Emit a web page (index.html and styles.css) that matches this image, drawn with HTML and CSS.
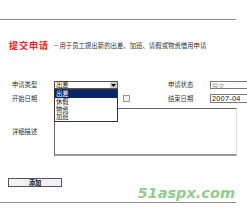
FILE: index.html
```html
<!DOCTYPE html>
<html>
<head>
<meta charset="utf-8">
<link rel="stylesheet" href="styles.css">
</head>
<body>
<div class="page">
  <div class="header">
    <span class="title">提交申请</span>
    <span class="subtitle">－用于员工提出新的出差、加班、请假或物资借用申请</span>
  </div>
  <div class="form">
    <div class="label">申请类型</div>
    <div class="cell">
      <div class="select">
        <span class="select-text">出差</span>
        <span class="select-btn"><svg width="5" height="3" viewBox="0 0 5 3"><path d="M0 0H5L2.5 3Z" fill="#000"/></svg></span>
      </div>
      <div class="options">
        <div class="opt sel">出差</div>
        <div class="opt">休假</div>
        <div class="opt">物资</div>
        <div class="opt">加班</div>
      </div>
    </div>
    <div class="label">申请状态</div>
    <div class="cell"><div class="input disabled">提交</div></div>

    <div class="label">开始日期</div>
    <div class="cell date-cell">
      <div class="input date-input"></div>
      <span class="cal-btn"></span>
    </div>
    <div class="label">结束日期</div>
    <div class="cell"><div class="input tall">2007-04</div></div>

    <div class="label desc-label">详细描述</div>
    <div class="textarea"></div>
  </div>
  <div class="actions">
    <button class="btn">添加</button>
  </div>
  <div class="watermark">51aspx.com</div>
</div>
</body>
</html>
```
FILE: styles.css
```css
html, body {
  margin: 0;
  padding: 0;
  width: 247px;
  height: 222px;
  overflow: hidden;
  background: #ffffff;
  font-family: "Noto Sans CJK SC", "Liberation Sans", sans-serif;
  color: #222;
}
.page {
  position: relative;
  margin-top: 19px;
  width: 236px;
  height: 182px;
  border-top: 1px solid #8c8c8c;
  border-bottom: 1px solid #8c8c8c;
}
.header {
  display: flex;
  align-items: center;
  height: 10px;
  margin-top: 21px;
  padding-left: 9px;
}
.title {
  color: #e5212b;
  font-weight: 700;
  font-size: 9px;
  letter-spacing: 1px;
  line-height: 10px;
}
.subtitle {
  margin-left: 4px;
  font-size: 6.4px;
  line-height: 10px;
  color: #333;
}
.form {
  display: grid;
  grid-template-columns: 54px 114px 42px 37px;
  grid-template-rows: 8px 9px 48px;
  row-gap: 5px;
  margin-top: 30px;
}
.label {
  font-size: 6.3px;
  line-height: 8px;
  padding-left: 12px;
  align-self: center;
  color: #333;
  white-space: nowrap;
}
.form > .label:nth-child(3),
.form > .label:nth-child(7) {
  padding-left: 0;
}
.cell {
  position: relative;
  display: flex;
  align-items: stretch;
}
.select {
  width: 64px;
  box-sizing: border-box;
  border: 1px solid #555;
  display: flex;
  align-items: center;
  justify-content: space-between;
  background: #fff;
}
.select-text {
  font-size: 6.3px;
  line-height: 6px;
  padding-left: 1px;
}
.select-btn {
  width: 7px;
  height: 6px;
  background: #d4d0c8;
  border-left: 1px solid #fff;
  display: flex;
  align-items: center;
  justify-content: center;
}
.options {
  position: absolute;
  top: 8px;
  left: 0;
  width: 64px;
  height: 33px;
  box-sizing: border-box;
  border: 1px solid #333;
  background: #fff;
  z-index: 5;
}
.opt {
  height: 7.75px;
  font-size: 6.3px;
  line-height: 7.75px;
  padding-left: 1px;
  color: #222;
}
.opt.sel {
  background: #0a246a;
  color: #fff;
}
.input {
  width: 37px;
  box-sizing: border-box;
  border: 1px solid #7a7a7a;
  border-right: none;
  font-family: "Liberation Sans", "Noto Sans CJK SC", sans-serif;
  font-size: 6.5px;
  line-height: 7px;
  padding-left: 1px;
  white-space: nowrap;
  overflow: hidden;
  background: #fff;
}
.input.disabled {
  font-family: "Noto Sans CJK SC", sans-serif;
  color: #999;
  font-size: 6.2px;
}
.input.tall {
  font-size: 7.4px;
  letter-spacing: 0.2px;
}
.date-cell {
  align-items: center;
}
.date-input {
  width: 64px;
  height: 9px;
  border-right: 1px solid #7a7a7a;
}
.cal-btn {
  width: 5px;
  height: 5px;
  margin-left: 5px;
  border: 1px solid #999;
  background: #f4f4f4;
}
.desc-label {
  align-self: center;
}
.textarea {
  grid-column: 2 / 5;
  width: 183px;
  box-sizing: border-box;
  border-top: 1px solid #666;
  border-left: 1px solid #666;
  border-right: 1px solid #ddd;
  border-bottom: 2px solid #999;
  background: #fff;
}
.actions {
  margin-top: 22px;
  padding-left: 8px;
}
.btn {
  display: block;
  width: 54px;
  height: 9px;
  padding: 0;
  margin: 0;
  box-sizing: border-box;
  border: 1px solid #555;
  background: #eef3f8;
  font-family: "Noto Sans CJK SC", sans-serif;
  font-weight: 700;
  font-size: 6.3px;
  line-height: 7px;
  color: #111;
}
.watermark {
  position: absolute;
  right: 1px;
  bottom: 1px;
  font-family: "DejaVu Sans", sans-serif;
  font-style: italic;
  font-weight: 700;
  font-size: 14.5px;
  line-height: 15px;
  color: #8fcf8a;
}
```
